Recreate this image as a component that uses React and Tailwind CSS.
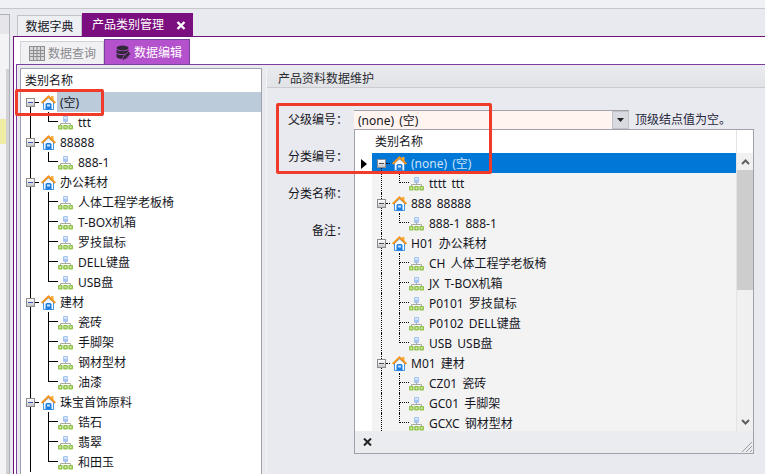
const leftTree = [
  { label: "(空)", selected: true, children: ["ttt"] },
  { label: "88888", children: ["888-1"] },
  { label: "办公耗材", children: ["人体工程学老板椅", "T-BOX机箱", "罗技鼠标", "DELL键盘", "USB盘"] },
  { label: "建材", children: ["瓷砖", "手脚架", "钢材型材", "油漆"] },
  { label: "珠宝首饰原料", children: ["锆石", "翡翠", "和田玉"] },
];

const popupTree = [
  { label: "(none) (空)", selected: true, children: ["tttt ttt"] },
  { label: "888 88888", children: ["888-1 888-1"] },
  { label: "H01 办公耗材", children: ["CH 人体工程学老板椅", "JX T-BOX机箱", "P0101 罗技鼠标", "P0102 DELL键盘", "USB USB盘"] },
  { label: "M01 建材", children: ["CZ01 瓷砖", "GC01 手脚架", "GCXC 钢材型材"] },
];

function HomeIcon() {
  return (
    <svg width="15" height="15" viewBox="0 0 15 15" className="shrink-0">
      <path d="M2.5 7V14.5H12.5V7L7.5 3Z" fill="#fbfcff" stroke="#3f92e6" strokeWidth="1" />
      <rect x="10" y="1" width="2.5" height="4" fill="#f8b040" />
      <path d="M0.7 8L7.5 1.4L14.3 8" fill="none" stroke="#f5951c" strokeWidth="2" />
      <path d="M4.5 14.5V9.5Q4.5 8 6 8H9Q10.5 8 10.5 9.5V14.5Z" fill="#1c7ee0" />
      <rect x="6" y="9.5" width="3" height="2" fill="#c4e4fc" />
    </svg>
  );
}

function NetIcon() {
  return (
    <svg width="15" height="15" viewBox="0 0 15 15" className="shrink-0">
      <rect x="5" y="1" width="5" height="6" rx="1" fill="#a6c4f2" />
      <rect x="6" y="2" width="3" height="2" fill="#d6e4fa" />
      <path d="M7.5 7V9M2.5 10V8.5H12.5V10" fill="none" stroke="#a8aca0" strokeWidth="1" />
      <rect x="0" y="10" width="4.6" height="4.4" rx="1" fill="#8fc24a" />
      <rect x="5.2" y="10" width="4.6" height="4.4" rx="1" fill="#8fc24a" />
      <rect x="10.4" y="10" width="4.6" height="4.4" rx="1" fill="#8fc24a" />
      <rect x="1.4" y="11.2" width="1.8" height="2" fill="#d4eca8" />
      <rect x="6.6" y="11.2" width="1.8" height="2" fill="#d4eca8" />
      <rect x="11.8" y="11.2" width="1.8" height="2" fill="#d4eca8" />
    </svg>
  );
}

function GridIcon() {
  return (
    <svg width="16" height="15" viewBox="0 0 16 15" className="shrink-0">
      <rect x="0.5" y="0.5" width="15" height="14" fill="#d8d8da" stroke="#8e8e90" />
      <path d="M0 4.5H16M0 7.5H16M0 10.5H16M4.5 0V15M8 0V15M11.5 0V15" stroke="#8e8e90" />
    </svg>
  );
}

function DbEditIcon() {
  return (
    <svg width="15" height="16" viewBox="0 0 15 16" className="shrink-0">
      <ellipse cx="6.5" cy="3" rx="6" ry="2.6" fill="#33283a" />
      <path d="M0.5 4.5V11.5C0.5 13 3 14 6.5 14C10 14 12.5 13 12.5 11.5V4.5C11 6.5 2 6.5 0.5 4.5Z" fill="#33283a" />
      <path d="M0.5 8.2C2.5 10 10.5 10 12.5 8.2" fill="none" stroke="#b452cd" />
      <path d="M6 15.5L7 12L12.5 6.5L14.8 8.8L9.3 14.3Z" fill="#33283a" stroke="#b452cd" strokeWidth="0.7" />
    </svg>
  );
}

function RootRow({ node, first, dotted }) {
  const line = dotted ? "border-l border-dotted border-black" : "border-l border-black";
  const dash = dotted ? "border-t border-dotted border-black" : "border-t border-black";
  return (
    <div className="flex h-5 items-center">
      <div className="relative h-5 w-[20px] shrink-0">
        {!first && <div className={`absolute left-[9px] top-0 h-[6px] ${line}`} />}
        <div className={`absolute left-[9px] top-[15px] h-[5px] ${line}`} />
        <div className={`absolute left-[14px] top-[10px] w-[4px] ${dash}`} />
        <div className="absolute left-[5px] top-[6px] flex h-[9px] w-[9px] items-center justify-center border border-[#8c8c90] bg-gradient-to-b from-white to-[#c4c4c8]">
          <div className={dotted ? "h-px w-[5px] bg-[#505058]" : "h-px w-[5px] bg-[#3858b8]"} />
        </div>
      </div>
      <HomeIcon />
      <span className={
        node.selected
          ? dotted
            ? "ml-px flex h-5 flex-1 items-center pl-[3px] pt-px text-[#cfe3f8] [word-spacing:2px]"
            : "ml-px flex h-5 flex-1 items-center bg-[#bccbd9] pl-[3px] pt-px"
          : "ml-px pl-[3px] pt-px [word-spacing:2px]"
      }>
        {node.label}
      </span>
    </div>
  );
}

function ChildRow({ label, last, dotted }) {
  const line = dotted ? "border-l border-dotted border-black" : "border-l border-black";
  const elbow = dotted ? "border-l border-b border-dotted border-black" : "border-l border-b border-black";
  return (
    <div className="flex h-5 items-center">
      <div className={`ml-[9px] h-5 w-[18px] shrink-0 ${line}`} />
      <div className="flex h-5 w-[10px] shrink-0 flex-col">
        <div className={`h-[10px] ${elbow}`} />
        {!last && <div className={`h-[10px] ${line}`} />}
      </div>
      <NetIcon />
      <span className="ml-[5px] whitespace-nowrap pt-px [word-spacing:2px]">{label}</span>
    </div>
  );
}

function Tree({ nodes, dotted }) {
  return nodes.map((node, i) => (
    <div key={node.label}>
      <div className={node.selected && dotted ? "bg-[#0078d7]" : ""}>
        <RootRow node={node} first={i === 0} dotted={dotted} />
      </div>
      {node.children.map((c, j) => (
        <ChildRow key={c} label={c} last={j === node.children.length - 1} dotted={dotted} />
      ))}
    </div>
  ));
}

function Field({ label, children }) {
  return (
    <div className="flex h-[37px] items-center">
      <div className="w-[81px] shrink-0 pt-px text-right">{label}</div>
      <div className="ml-[6px] flex items-center">{children}</div>
    </div>
  );
}

function ComboPopup() {
  return (
    <div className="absolute left-[87px] top-[61px] z-10 flex h-[325px] w-[400px] flex-col border border-[#a0a1ab] bg-white">
      <div className="flex min-h-0 flex-1">
        <div className="w-[17px] shrink-0 pt-[29px] pl-[6px]">
          <svg width="6" height="10" viewBox="0 0 6 10">
            <path d="M0 0L6 5L0 10Z" fill="#000" />
          </svg>
        </div>
        <div className="flex min-w-0 flex-1 flex-col">
          <div className="flex h-[23px] shrink-0 items-center pl-[3px] pt-px">类别名称</div>
          <div className="min-h-0 flex-1 overflow-hidden bg-[#f3f3f3]">
            <Tree nodes={popupTree} dotted />
          </div>
        </div>
        <div className="flex w-[17px] shrink-0 flex-col border-l border-[#e4e4e8]">
          <div className="h-[23px] shrink-0 bg-white" />
          <div className="flex h-[17px] shrink-0 items-center justify-center bg-[#f0f0f0]">
            <svg width="9" height="6" viewBox="0 0 9 6">
              <path d="M1 5L4.5 1.5L8 5" fill="none" stroke="#606060" strokeWidth="2" />
            </svg>
          </div>
          <div className="h-[120px] shrink-0 bg-[#cdcdcd]" />
          <div className="flex flex-1 items-end justify-center bg-[#f0f0f0] pb-[6px]">
            <svg width="9" height="6" viewBox="0 0 9 6">
              <path d="M1 1L4.5 4.5L8 1" fill="none" stroke="#606060" strokeWidth="2" />
            </svg>
          </div>
        </div>
      </div>
      <div className="flex h-[22px] shrink-0 items-center justify-between bg-[#ebecf0] pl-[8px]">
        <svg width="9" height="8" viewBox="0 0 9 8">
          <path d="M1 0.5L8 7.5M8 0.5L1 7.5" stroke="#222" strokeWidth="2" />
        </svg>
        <svg width="12" height="12" viewBox="0 0 12 12" className="mt-[9px]">
          <path d="M11 1L1 11M11 5L5 11M11 9L9 11" stroke="#9a9aa0" />
        </svg>
      </div>
    </div>
  );
}

export default function App() {
  return (
    <div className="relative flex h-[474px] w-[765px] flex-col overflow-hidden bg-[#e9eaef] text-[12px] leading-none text-[#16161e] [font-family:'Noto_Sans','Noto_Sans_CJK_SC',sans-serif]">
      <div className="h-[9px] shrink-0 border-b border-[#c6c7cb] bg-[#f0f1f4]" />
      <div className="flex min-h-0 flex-1 pt-[4px]">
        <div className="flex w-[10px] shrink-0 flex-col pt-px">
          <div className="flex min-h-0 flex-1 flex-col border-r border-t border-[#b0b1b8] bg-[#f3f3f5]">
            <div className="h-[19px] shrink-0 bg-[#e6e6ea]" />
            <div className="h-[35px] shrink-0" />
            <div className="flex min-h-0 flex-1">
              <div className="flex-1 pt-[50px]">
                <div className="h-[25px] bg-[#efeba4]" />
              </div>
              <div className="w-[3px] bg-[#d2d2d6]" />
            </div>
          </div>
        </div>

        <div className="flex min-w-0 flex-1 flex-col pl-[3px]">
          <div className="flex h-[23px] shrink-0 items-end pl-[4px]">
            <div className="flex h-[21px] w-[65px] items-center justify-center border border-b-0 border-[#c2c3c9] bg-[#eeeff3] pt-px">数据字典</div>
            <div className="flex h-[23px] w-[111px] items-center bg-[#7b0f7f] pl-[10px] pt-px text-white">
              产品类别管理
              <svg width="10" height="9" viewBox="0 0 10 9" className="ml-[12px]">
                <path d="M1.5 1L8.5 8M8.5 1L1.5 8" stroke="#fff" strokeWidth="2.4" />
              </svg>
            </div>
          </div>

          <div className="flex min-h-0 flex-1 flex-col border-l border-t border-[#6f0f78] bg-white pl-[2px]">
            <div className="flex h-[27px] shrink-0 items-end pl-[4px]">
              <div className="flex h-[23px] w-[84px] items-center gap-[3px] border border-b-0 border-[#d0d1d6] bg-[#f1f1f3] pl-[8px] pt-px text-[#8b8b90]">
                <GridIcon />
                数据查询
              </div>
              <div className="flex h-[25px] w-[86px] items-center gap-[3px] border border-b-0 border-[#7b3fa0] bg-[#b452cd] pl-[11px] pt-px text-white">
                <DbEditIcon />
                数据编辑
              </div>
            </div>

            <div className="flex min-h-0 flex-1 gap-[4px] border-l border-t border-[#7b3fa0] bg-[#e9eaef] pl-[3px] pt-[3px]">
              <div className="flex w-[242px] shrink-0 flex-col overflow-hidden border border-b-0 border-[#a0a1ab] bg-white">
                <div className="flex h-[23px] shrink-0 items-center pl-[4px] pt-px">类别名称</div>
                <Tree nodes={leftTree} />
              </div>

              <div className="relative flex min-w-0 flex-1 flex-col border-l border-[#f4f4f7]">
                <div className="flex h-[20px] shrink-0 items-center border-b border-[#cbccd1] bg-gradient-to-b from-[#e9eaed] to-[#e2e3e7] pl-[11px] pt-[2px] text-[#2a2a32]">
                  产品资料数据维护
                </div>
                <div className="flex flex-col pt-[13px]">
                  <Field label="父级编号：">
                    <div className="flex h-[19px] w-[275px] border-t border-[#a0a1ab] bg-[#fff4ef]">
                      <div className="flex flex-1 items-center pl-[4px] pt-px [word-spacing:2px]">(none) (空)</div>
                      <div className="flex w-[17px] items-center justify-center border border-[#c0c1c9] bg-[#d9dae1]">
                        <svg width="7" height="4" viewBox="0 0 7 4">
                          <path d="M0 0H7L3.5 4Z" fill="#222" />
                        </svg>
                      </div>
                    </div>
                    <span className="ml-[6px] pt-px text-[#26263c]">顶级结点值为空。</span>
                  </Field>
                  <Field label="分类编号：" />
                  <Field label="分类名称：" />
                  <Field label="备注：" />
                </div>
                <ComboPopup />
              </div>
            </div>
          </div>
        </div>
      </div>

      <div className="absolute left-[15px] top-[89px] z-20 h-[27px] w-[89px] rounded-[2px] border-[3px] border-[#f03a2a]" />
      <div className="absolute left-[276px] top-[103px] z-20 h-[71px] w-[216px] rounded-[2px] border-[3px] border-[#f03a2a]" />
    </div>
  );
}
